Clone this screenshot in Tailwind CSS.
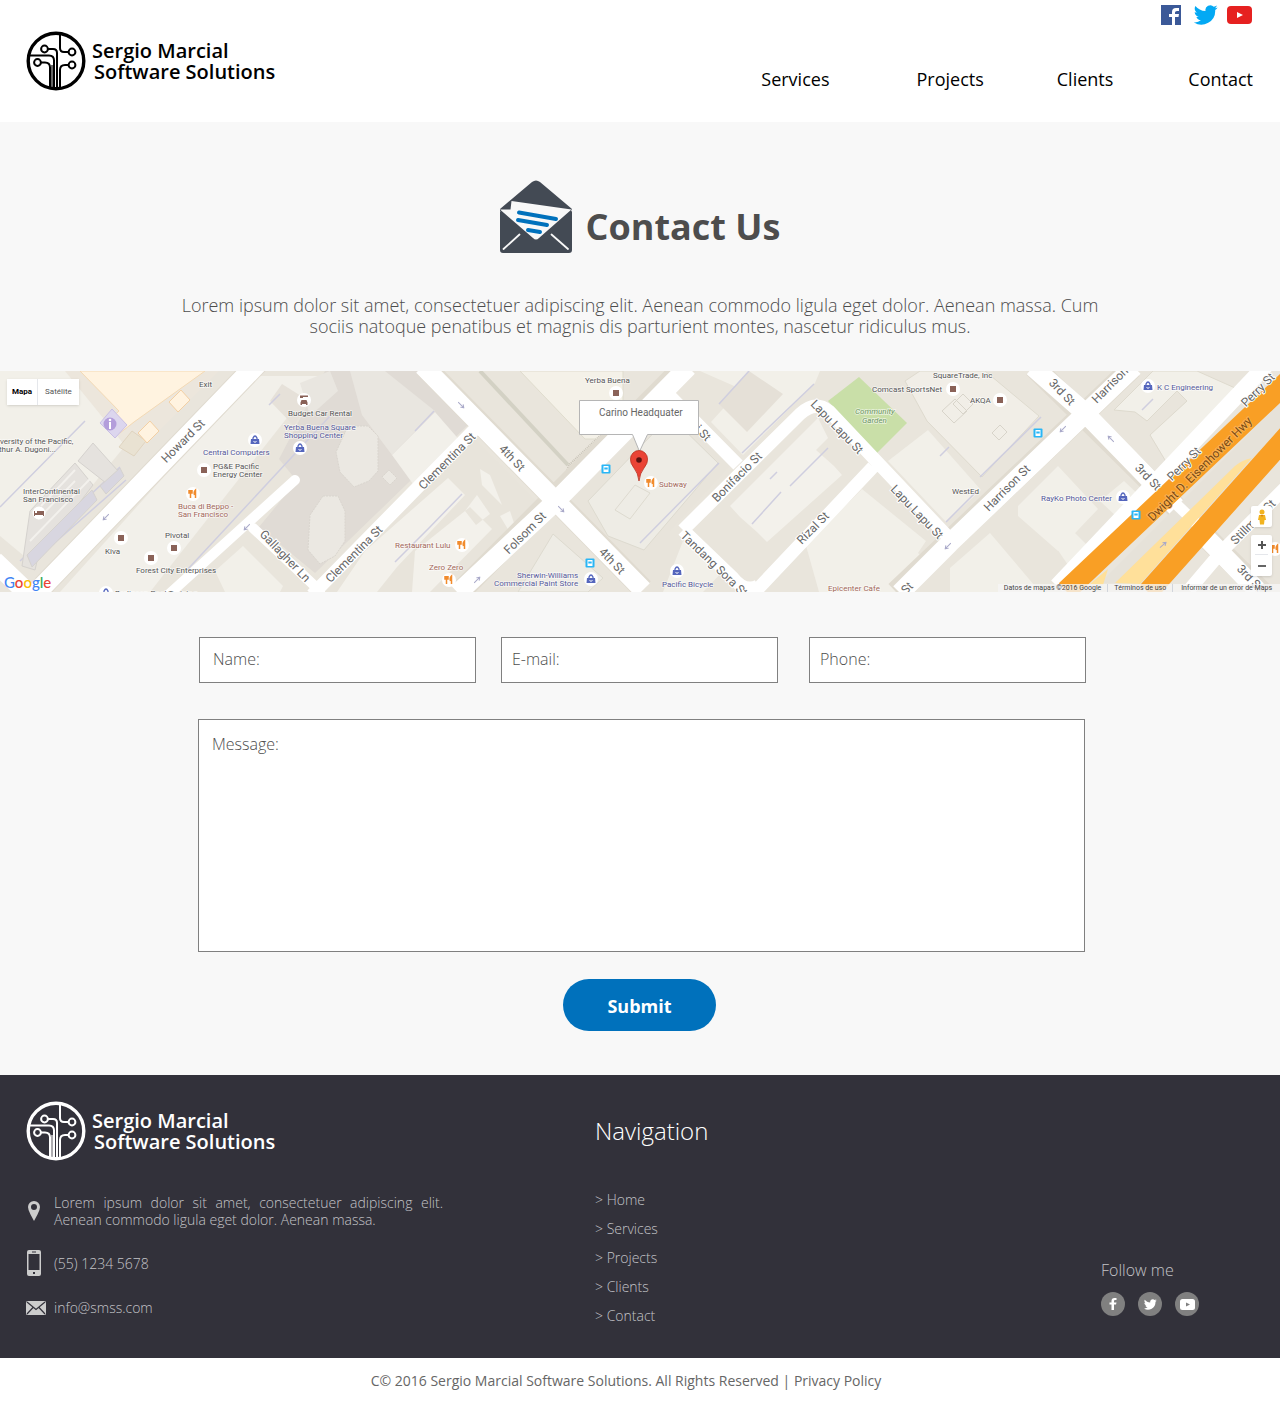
<!DOCTYPE html>
<html lang="en">
<head>
<meta charset="utf-8">
<meta name="viewport" content="width=device-width, initial-scale=1">
<title>Contact Us - Sergio Marcial Software Solutions</title>
<script src="https://cdn.jsdelivr.net/npm/@tailwindcss/browser@4"></script>
</head>
<body class="bg-white font-['Open_Sans',sans-serif] text-black">

<!-- Shared symbols -->
<svg class="hidden" aria-hidden="true">
  <symbol id="logo" viewBox="0 0 60 60">
    <g fill="none" stroke="currentColor">
      <circle cx="30" cy="30" r="27.8" stroke-width="3.4"/>
      <g stroke-width="2">
        <circle cx="18.5" cy="18" r="3.4"/><circle cx="46" cy="21" r="3.4"/>
        <circle cx="11.500" cy="31.500" r="3.400"/><circle cx="46" cy="34" r="3.400"/>
        <path d="M22 18h5q4 0 4 4v35M34 4v13q0 4 4 4h5M3 24.500h20q5 0 5 5V57M15 31.500h4q5 0 5 5V56M43 34h-4q-5 0-5 5v17"/>
      </g>
      <path stroke-width="1.200" d="M26 34v23"/>
    </g>
  </symbol>
  <symbol id="bird" viewBox="0 0 24 20">
    <path fill="currentColor" d="M23.600 2.400c-.9.400-1.800.7-2.800.8 1-.6 1.800-1.600 2.100-2.700-.9.600-2 1-3.100 1.200A4.900 4.900 0 0 0 11.500 6.100C7.400 5.900 3.800 4 1.400 1 .1 3.200.7 6 2.900 7.500c-.8 0-1.500-.2-2.200-.6 0 2.300 1.600 4.400 3.900 4.900-.7.200-1.500.2-2.200.1.600 1.900 2.400 3.300 4.500 3.400A9.800 9.800 0 0 1-.3 17.300 13.900 13.900 0 0 0 21.200 5c.9-.7 1.800-1.600 2.400-2.600z"/>
  </symbol>
  <symbol id="poi" viewBox="-8 -8 16 16"><circle r="7" fill="#fff"/><rect x="-3" y="-3" width="6" height="6" fill="#8a6258"/></symbol>
  <symbol id="food" viewBox="-8 -8 16 16"><circle r="7" fill="#fff"/><path fill="none" stroke="#f18b2c" stroke-width="1.500" d="M-2.500-4V4M-4-4v3h3v-3M2.500 4v-8q-2 2-1 5"/></symbol>
  <symbol id="shop" viewBox="-8 -8 16 16"><circle r="7" fill="#fff"/><path fill="#5566bd" d="M-4-1h8l.5 5h-9z"/><path fill="none" stroke="#5566bd" stroke-width="1.300" d="M-2-1v-1q2-4 4 0v1"/><path fill="none" stroke="#fff" d="M-1.500 1.500q1.500 1.500 3 0"/></symbol>
  <symbol id="bus" viewBox="-5 -5 10 10"><rect x="-4.500" y="-4.500" width="9" height="9" rx="1" fill="#29b6f6"/><path fill="#fff" d="M-2.500-3h5v6h-5z"/><path fill="#29b6f6" d="M-1.700-1.500h3.400v2h-3.400z"/></symbol>
  <symbol id="arrow" viewBox="-5 -5 10 10"><path fill="none" stroke="#a9a9c9" d="M-4 0h8M1-2l3 2-3 2"/></symbol>
</svg>

<header class="flex h-[122px] items-start justify-between bg-white pl-[26px] pr-[27px]">
  <a href="#" class="mt-[31px] flex gap-[6px]">
    <svg class="h-[60px] w-[60px]" aria-hidden="true"><use href="#logo"/></svg>
    <span class="mt-[9px] text-[20px] font-semibold leading-[21px]">Sergio Marcial<br><span class="pl-[2px]">Software Solutions</span></span>
  </a>
  <div class="flex flex-col items-end pt-[5px]">
    <div class="flex items-center gap-[9px] pr-px">
      <a href="#" aria-label="Facebook"><svg class="h-5 w-5" viewBox="0 0 20 20"><rect width="20" height="20" fill="#3b5998"/><path fill="#fff" d="M11 20v-8H8V9h3V7q0-4 4-4h3v3h-2q-2 0-2 1.500V9h4l-.5 3H14v8z"/></svg></a>
      <a href="#" aria-label="Twitter" class="ml-1 text-[#03a9f4]"><svg class="h-5 w-6"><use href="#bird"/></svg></a>
      <a href="#" aria-label="YouTube"><svg class="h-[18px] w-[25px]" viewBox="0 0 25 18"><rect width="25" height="18" rx="4" fill="#e62120"/><path fill="#fff" d="M10 6l6 3-6 3z"/></svg></a>
    </div>
    <nav class="mt-[42px] flex text-[18px] leading-6">
      <a href="#">Services</a>
      <a href="#" class="ml-[87px]">Projects</a>
      <a href="#" class="ml-[73px]">Clients</a>
      <a href="#" class="ml-[75px]">Contact</a>
    </nav>
  </div>
</header>

<main class="bg-[#f8f8f8] pb-11">
  <section class="flex flex-col items-center pt-[58px]">
    <h1 class="flex items-end gap-[13px] pr-px text-[36px] font-bold leading-[52px] text-[#4d4d4d]">
      <svg class="h-[73px] w-[74px]" viewBox="0 0 74 73" aria-hidden="true">
        <path fill="#434a54" d="M1 29 33 2q4-3 8 0l32 27-1 2H1zM2 31h70q1 0 1 1v38q0 3-3 3H4q-3 0-3-3V32q0-1 1-1z"/>
        <path fill="#f8f8f8" d="M1 29.500h10.500l1-8.500 60 8.500L40 58q-3 3-6 0z"/>
        <path stroke="#f8f8f8" stroke-width="1.800" stroke-linecap="round" d="M20.500 54.500 4.500 69M52.500 54.500 69 69"/>
        <path stroke="#0071bc" stroke-width="4" stroke-linecap="round" d="M20 32.500 57 39M19 40l29 5M29 50l12 2"/>
      </svg>
      <span>Contact Us</span>
    </h1>
    <p class="mt-[42px] max-w-[952px] px-3 text-center text-[18px] font-light leading-[21px] text-[#4d4d4d]">Lorem ipsum dolor sit amet, consectetuer adipiscing elit. Aenean commodo ligula eget dolor. Aenean massa. Cum sociis natoque penatibus et magnis dis parturient montes, nascetur ridiculus mus.</p>
  </section>

  <section class="relative mt-[34px] h-[221px] overflow-hidden bg-[#e9e5dc] font-['Roboto',sans-serif]" aria-label="Map">
    <svg class="h-full w-full" viewBox="0 0 1280 221" preserveAspectRatio="xMidYMid slice">
      <!-- Blocks and buildings -->
      <path fill="#f2f0e9" d="M0 0h70l55 75-95 115L0 165z"/>
      <path fill="#ece6dc" d="M65 0 134 85l85-85z"/>
      <path fill="#fff3e0" stroke="#f3d9b4" d="M80 0 119 40 108 50l12 12 14-11 71-51z"/>
      <path fill="#e9e2d2" stroke="#dfd4c0" d="m119 76 15 9 12-15-14-10z"/>
      <path fill="#fff3e0" stroke="#f3d0a4" d="m138 62 12-12 9 10-12 12zM169 31l12-12 9 10-12 12z"/>
      <path fill="#dcd6ee" stroke="#c9bfe4" d="m100 52 12-14 15 16-12 13z"/>
      <path fill="#f2f0ea" d="m160 110 100-105h60L150 221H60z"/>
      <path fill="#e0dbd5" d="M325 0h100l45 52-155 150-56-46 38-46-18-22z"/>
      <path fill="#e9e6e0" d="M350 0h35l50 40-43 44-30-40zM300 12l30-12 8 20-28 25z"/>
      <path fill="#f2f0ea" d="m392 84 43-43 27 31-42 40-7 1z"/>
      <path fill="#e6e1d9" d="m270 30 24 25 15-25-27-17z"/>
      <g fill="#ebe8e2" stroke="#d9d5ce" stroke-dasharray="2 1">
        <path d="M348 55h20l10 10v35l-9 10-15 6-14-15-4-20z"/><path d="M323 125h15l7 15v30l-10 15-15 8-12-14 2-35z"/><path d="m382 106 7-7 8 8-7 7z"/>
      </g>
      <path fill="#e8e4db" d="m325 221 150-153 69 70-85 83zM570 130l70-70 45-10 45 45-60 65v61h-30z"/>
      <path fill="#f3f1eb" d="m365 180 83-73 17 17-68 72-20 25h-40zM415 180l55-44 22 22-62 63h-18zM465 140l11 14 14-11-13-19zM480 98l10 6 12 30-20-20zM500 145l10-5 5 15-6 5z"/>
      <path fill="#f4f1e8" stroke="#dfdccd" d="m520 0 65 68h18l20-20V0z"/>
      <path fill="none" stroke="#d3d1c4" stroke-width="4" d="m480 0 88 94"/>
      <path fill="none" stroke="#c9c4b8" stroke-width="2" stroke-dasharray="1 1" d="m561 118 8-24 34-32"/>
      <path fill="#eeece5" stroke="#dddacf" d="m588 130 82-85 48 47-74 87-36-14zM615 139l20-25 15 8-20 26zM518 221l35-58 50 44-15 14z"/>
      <path fill="#f2f0e9" d="m700 0 120 0-5 12-72 72-32-33 30-33z"/>
      <path fill="#e5e0d7" d="m719 33 30-33 34 23-36 38z"/>
      <path fill="#f3f1eb" d="m730 135 88-88 10 20-12 12 18 16 8 9-75 67-10-10-17-15z"/>
      <path fill="#c9dfa8" d="m828 30 31-24 48 46-31 31z"/>
      <path fill="#f2f0e9" d="m888 90 40-31 53 60-35 32zM850 130l12-12 64 52-8 12 15 14-30 25h-84l-14-50z"/>
      <path fill="#f1eee7" stroke="#dedace" d="m905 10 15-10h65l54 45-57 61-55-56z"/>
      <path fill="none" stroke="#d8d4ca" d="m942 40 13-12 12 12-13 12zM953 33l10-10 10 10-10 10zM992 62l8-8 7 7-8 8z"/>
      <path fill="#f2f0e9" d="m950 197 40-35 50 59h-90zM1018 135l40-40 40 43-40 42-40-35zM1045 160l15-13 30 30-20 20zM1100 130l24-20 17 16-24 20z"/>
      <path fill="#f2f0e9" stroke="#dedace" d="m1114 39 39-39h44l47 21-76 73-18-30 37-34-10-10-30 30-12-9z"/>
      <path fill="#f2f0e9" d="m683 170 45 25-25 26h-40zM215 200l28-25 40 40-3 6h-55z"/>
      <path stroke="#cfcedf" stroke-width="1.500" fill="none" d="M0 136 85 50M20 190l100-94M34 190l92-81M188 198 330 45M269 34l11-11M415 60l19-20M462 123l-33 34-34 34M719 33l30-33M742 82l72-69M752 153l29-32M790 115l38-38M770 108l7-7M946 151l30-30M980 106l61-60M1142 39l11-11M1169 94l73-73M940 85l9-9M640 172l79-80"/>
      <!-- Hotel blocks -->
      <g fill="#e5e2de" stroke="#d5d2ce"><path d="m22 195 8-55 45-48 18 22-55 72-3 13zM78 90l15-18 25 28-12 12z"/><path fill="#d8d6e0" d="m27 184 65-65 5 10-65 67zM100 115l20-18 4 8-18 18z"/></g>
      <path fill="none" stroke="#f3f1ed" stroke-width="2" d="m30 170 60-62m-52 40 37-38m-34 25 34-36"/>
      <!-- Streets -->
      <g fill="none" stroke="#e0dbd0" stroke-width="22"><path d="m258-8-215 223"/><path d="m425-4 218 222M460 221 680 0M1034-4l232 229M896 221l236-224"/></g>
      <g fill="none" stroke="#fff" stroke-linejoin="round">
        <path stroke-width="20" d="M260-10 43 215l-13 13M-6 190l44 42"/>
        <path stroke-width="10" stroke-linecap="round" d="M295 109 167 225M253 157l67 63"/>
        <path stroke-width="13" d="M477 56 312 224M660 15l78 79M1285 117l-62 62-34 40"/>
        <path stroke-width="19" d="m423-5 220 224M458 222 555 131 688-4M1033-4l50 44 174 179M900 222 950 172 1134-4"/>
        <path stroke-width="13" d="m755 221 118-125M683 159 800 43q15-14 29-3l120 127M683 159l50 48q12 15 25 8"/>
        <path stroke-width="16" d="m1270-10-213 225"/>
      </g>
      <!-- Highway -->
      <path fill="#e6e2d9" d="m1280 32-180 180h50l130-135z"/>
      <path stroke="#fff" stroke-width="11" d="m1175 132 50 48"/>
      <path fill="#ffe09a" d="M1115 212 1235 95q7-6 17-8l-112 126zM1090 213l18-15-5 16z"/>
      <path stroke="#f99f25" stroke-width="21" d="m1290 8-224 212M1288 64l-140 157"/>
      <g>
        <use href="#arrow" x="-5" y="-5" width="10" height="10" transform="translate(106 146) rotate(135)"/><use href="#arrow" x="-5" y="-5" width="10" height="10" transform="translate(247 156) rotate(135)"/><use href="#arrow" x="-5" y="-5" width="10" height="10" transform="translate(461 34) rotate(45)"/><use href="#arrow" x="-5" y="-5" width="10" height="10" transform="translate(561 138) rotate(45)"/><use href="#arrow" x="-5" y="-5" width="10" height="10" transform="translate(477 209) rotate(-45)"/><use href="#arrow" x="-5" y="-5" width="10" height="10" transform="translate(1063 58) rotate(135)"/><use href="#arrow" x="-5" y="-5" width="10" height="10" transform="translate(1111 68) rotate(225)"/><use href="#arrow" x="-5" y="-5" width="10" height="10" transform="translate(1163 174) rotate(-40)"/><use href="#arrow" x="-5" y="-5" width="10" height="10" transform="translate(948 175) rotate(135)"/>
      </g>
      <!-- Street names -->
      <g font-size="12" fill="#666" stroke="#fff" stroke-width="2" paint-order="stroke" text-anchor="middle" dominant-baseline="central">
        <text transform="translate(183 70) rotate(-45)">Howard St</text>
        <text transform="translate(447 90) rotate(-45)">Clementina St</text>
        <text transform="translate(354 183) rotate(-45)">Clementina St</text>
        <text transform="translate(285 185) rotate(46)">Gallagher Ln</text>
        <text transform="translate(512 87) rotate(46)">4th St</text>
        <text transform="translate(612 190) rotate(46)">4th St</text>
        <text transform="translate(525 162) rotate(-45)">Folsom St</text>
        <text transform="translate(703 62) rotate(46)">i St</text>
        <text transform="translate(737 106) rotate(-45)">Bonifacio St</text>
        <text transform="translate(837 56) rotate(46)">Lapu Lapu St</text>
        <text transform="translate(917 141) rotate(46)">Lapu Lapu St</text>
        <text transform="translate(813 157) rotate(-45)">Rizal St</text>
        <text transform="translate(714 193) rotate(44)">Tandang Sora St</text>
        <text transform="translate(907 217) rotate(-45)">St</text>
        <text transform="translate(1062 21) rotate(46)">3rd St</text>
        <text transform="translate(1148 106) rotate(46)">3rd St</text>
        <text transform="translate(1250 207) rotate(46)">3rd St</text>
        <text transform="translate(1110 14) rotate(-45)">Harrison</text>
        <text transform="translate(1007 117) rotate(-45)">Harrison St</text>
        <text transform="translate(1258 19) rotate(-45)">Perry St</text>
        <text transform="translate(1184 93) rotate(-45)">Perry St</text>
        <text transform="translate(1253 151) rotate(-45)">Stillman St</text>
        <text transform="translate(1200 98) rotate(-45)" fill="#7a4a12" stroke="#fbb252">Dwight D. Eisenhower Hwy</text>
      </g>
      <!-- Places -->
      <g>
        <circle cx="110" cy="53" r="6.500" fill="#b39ddb"/><path stroke="#fff" stroke-width="2" d="M110 51v7"/><circle cx="110" cy="49" r="1.300" fill="#fff"/>
        <circle cx="39" cy="142" r="6.500" fill="#fff"/><path fill="#8a6258" d="M34 140h1v2h2v-2h7v5h-1v-1h-8v1h-1z"/>
        <circle cx="304" cy="29" r="7" fill="#fff"/><path fill="#8a6258" d="M300 24.500h8v1.500h-5v1h-3zM301.500 29h5l1 2.500v2.500h-1.500v-1h-4v1h-1.500v-2.500z"/>
        <use href="#shop" x="247" y="61" width="16" height="16"/><use href="#shop" x="292" y="69" width="16" height="16"/>
        <use href="#poi" x="196" y="91" width="16" height="16"/><use href="#food" x="185" y="115" width="16" height="16"/>
        <use href="#poi" x="113" y="159" width="16" height="16"/><use href="#poi" x="166" y="169" width="16" height="16"/><use href="#poi" x="143" y="179" width="16" height="16"/>
        <use href="#shop" x="98" y="214" width="16" height="16"/>
        <use href="#food" x="454" y="166" width="16" height="16"/><use href="#food" x="441" y="201" width="16" height="16"/>
        <use href="#poi" x="608" y="14" width="16" height="16"/><use href="#shop" x="583" y="200" width="16" height="16"/>
        <use href="#food" x="643" y="104" width="16" height="16"/><use href="#shop" x="669" y="192" width="16" height="16"/>
        <use href="#poi" x="945" y="10" width="16" height="16"/><use href="#poi" x="992" y="21" width="16" height="16"/>
        <use href="#shop" x="1140" y="7" width="16" height="16"/><use href="#shop" x="1115" y="118" width="16" height="16"/>
        <use href="#food" x="1267" y="170" width="16" height="16"/>
        <use href="#bus" x="601" y="93" width="10" height="10"/><use href="#bus" x="585" y="187" width="10" height="10"/><use href="#bus" x="1033" y="57" width="10" height="10"/><use href="#bus" x="1131" y="139" width="10" height="10"/>
      </g>
      <g font-size="8" fill="#555" stroke="#fff" stroke-opacity=".6" stroke-width="1.500" paint-order="stroke">
        <text x="199" y="16">Exit</text>
        <text x="-2" y="73">iversity of the Pacific,</text><text x="-1" y="81">thur A. Dugoni...</text>
        <text x="23" y="123">InterContinental</text><text x="23" y="131">San Francisco</text>
        <text x="288" y="45">Budget Car Rental</text>
        <text x="213" y="98">PG&amp;E Pacific</text><text x="213" y="106">Energy Center</text>
        <text x="105" y="183">Kiva</text><text x="165" y="167">Pivotal</text><text x="136" y="202">Forest City Enterprises</text>
        <text x="115" y="225">Barlinson Post Training</text>
        <text x="585" y="12">Yerba Buena</text>
        <text x="872" y="21">Comcast SportsNet</text><text x="933" y="7">SquareTrade, Inc</text><text x="970" y="32">AKQA</text><text x="952" y="123">WestEd</text>
        <g fill="#55599a"><text x="284" y="59">Yerba Buena Square</text><text x="284" y="67">Shopping Center</text><text x="203" y="84">Central Computers</text><text x="517" y="207">Sherwin-Williams</text><text x="494" y="215">Commercial Paint Store</text><text x="662" y="216">Pacific Bicycle</text><text x="1157" y="19">K C Engineering</text><text x="1041" y="130">RayKo Photo Center</text></g>
        <g fill="#a3685a"><text x="178" y="138">Buca di Beppo -</text><text x="178" y="146">San Francisco</text><text x="395" y="177">Restaurant Lulu</text><text x="429" y="199">Zero Zero</text><text x="659" y="116">Subway</text><text x="828" y="220">Epicenter Cafe</text></g>
        <g fill="#6b9460" font-style="italic"><text x="855" y="43">Community</text><text x="862" y="52">Garden</text></g>
      </g>
      <!-- Callout and pin -->
      <path fill="#fff" stroke="#b5b5b5" d="M579.500 29.500h119v34h-51l-8 17-7-17h-53z"/>
      <text x="599" y="45" font-size="10" fill="#666">Carino Headquater</text>
      <path fill="#ea4335" stroke="#b93221" stroke-width=".8" d="M639 110q-1-8-5-13-4-5-3.500-9a8.500 8.500 0 0 1 17 0q.5 4-3.500 9-4 5-5 13z"/><circle cx="639" cy="89" r="2.800" fill="#5c1210"/>
    </svg>
    <div class="absolute left-[7px] top-2 flex h-[26px] items-center bg-white text-[8px] shadow-sm">
      <button type="button" class="h-full border-r border-gray-200 px-[5px] font-bold">Mapa</button>
      <button type="button" class="h-full px-[7px] text-[#555]">Satélite</button>
    </div>
    <div class="absolute bottom-0 left-1 font-['Lato',sans-serif] text-[15px] font-medium leading-[19px]" aria-label="Google"><span class="text-[#4285f4]">G</span><span class="text-[#ea4335]">o</span><span class="text-[#fbbc05]">o</span><span class="text-[#4285f4]">g</span><span class="text-[#34a853]">l</span><span class="text-[#ea4335]">e</span></div>
    <div class="absolute right-2 top-[135px] flex w-[21px] flex-col gap-2">
      <button type="button" aria-label="Street View" class="flex h-[21px] items-center justify-center rounded-xs bg-white shadow-sm"><svg class="h-4 w-3" viewBox="0 0 12 16"><circle cx="6" cy="3" r="2.500" fill="#f2b31f"/><path fill="#f2b31f" d="M3 6h6l1 5H8.500L8 15.500H4L3.500 11H2z"/><path fill="#d98211" d="M4.500 6h3L6 8z"/></svg></button>
      <div class="flex flex-col rounded-xs bg-white px-1 shadow-sm">
        <button type="button" aria-label="Zoom in" class="flex h-5 items-center justify-center border-b border-gray-200"><svg class="h-2 w-2" viewBox="0 0 8 8"><path stroke="#555" stroke-width="2" d="M0 4h8M4 0v8"/></svg></button>
        <button type="button" aria-label="Zoom out" class="flex h-[21px] items-center justify-center"><svg class="h-2 w-2" viewBox="0 0 8 8"><path stroke="#666" stroke-width="2" d="M0 4h8"/></svg></button>
      </div>
    </div>
    <div class="absolute bottom-0 right-0 flex bg-[#f5f5f5]/80 text-[7px] leading-[8px] text-[#444]">
      <span class="px-[6px]">Datos de mapas ©2016 Google</span><a href="#" class="border-l border-gray-300 px-[6px]">Términos de uso</a><a href="#" class="border-l border-gray-300 px-2">Informar de un error de Maps</a>
    </div>
  </section>

  <form class="mt-[45px] flex flex-col items-center pl-1 text-[16px] font-light text-[#4d4d4d]">
    <div class="flex w-full max-w-[888px] flex-col">
      <div class="flex pl-px">
        <div class="flex h-[46px] min-w-0 flex-1 items-center border border-[#808080] bg-white pb-[2px] pl-[10px]"><label for="name" class="pl-[3px]">Name:</label><input id="name" type="text" class="ml-2 min-w-0 flex-1 outline-none"></div>
        <div class="ml-[25px] flex h-[46px] min-w-0 flex-1 items-center border border-[#808080] bg-white pb-[2px] pl-[10px]"><label for="email">E-mail:</label><input id="email" type="email" class="ml-2 min-w-0 flex-1 outline-none"></div>
        <div class="ml-[31px] flex h-[46px] min-w-0 flex-1 items-center border border-[#808080] bg-white pb-[2px] pl-[10px]"><label for="phone">Phone:</label><input id="phone" type="tel" class="ml-2 min-w-0 flex-1 outline-none"></div>
      </div>
      <div class="mr-px mt-9 flex h-[233px] flex-col border border-[#808080] bg-white px-[13px] pt-3"><label for="message">Message:</label><textarea id="message" class="flex-1 resize-none outline-none"></textarea></div>
    </div>
    <button type="submit" class="mr-[5px] mt-[27px] h-[52px] w-[153px] rounded-full bg-[#0071bc] pt-[3px] text-[18px] font-bold text-white">Submit</button>
  </form>
</main>

<footer>
  <div class="flex min-h-[283px] bg-[#32313a] font-light text-[#c4c4c8]">
    <div class="w-[595px] pl-[26px] pt-[26px]">
      <a href="#" class="flex gap-[6px] text-white">
        <svg class="h-[60px] w-[60px]" aria-hidden="true"><use href="#logo"/></svg>
        <span class="mt-[9px] text-[20px] font-semibold leading-[21px]">Sergio Marcial<br><span class="pl-[2px]">Software Solutions</span></span>
      </a>
      <ul class="mt-[33px] w-[417px] text-[14px] leading-[17px]">
        <li class="flex items-center gap-5">
          <svg class="ml-[2px] h-5 w-3 shrink-0" viewBox="0 0 12 20" aria-hidden="true"><path fill="#ccc" fill-rule="evenodd" d="M6 0a6 6 0 0 1 6 6q0 3-2.500 7.500L6 20l-3.500-6.500Q0 9 0 6a6 6 0 0 1 6-6zm0 3a3 3 0 1 0 0 6 3 3 0 0 0 0-6z"/></svg>
          <p class="-ml-[6px] text-justify">Lorem ipsum dolor sit amet, consectetuer adipiscing elit. Aenean commodo ligula eget dolor. Aenean massa.</p>
        </li>
        <li class="mt-[22px] flex items-center gap-[13px]">
          <svg class="ml-px h-[26px] w-[14px]" viewBox="0 0 14 26" aria-hidden="true"><path fill="#ccc" fill-rule="evenodd" d="M2 0h10q2 0 2 2v22q0 2-2 2H2q-2 0-2-2V2q0-2 2-2zM1.500 4v16h11V4zM6 22v2h2v-2zM5 1.500v1h4v-1z"/></svg>
          <span>(55) 1234 5678</span>
        </li>
        <li class="mt-[23px] flex items-center gap-2">
          <svg class="h-[14px] w-5" viewBox="0 0 20 14" aria-hidden="true"><rect width="20" height="14" rx="1.500" fill="#ccc"/><path fill="none" stroke="#32313a" stroke-width="1.200" d="m1 1 9 7.500L19 1M1 13l6-6.500M19 13l-6-6.500"/></svg>
          <a href="#">info@smss.com</a>
        </li>
      </ul>
    </div>
    <nav class="flex-1 pt-[38px]">
      <h2 class="text-[24px] leading-9 text-white">Navigation</h2>
      <ul class="mt-9 text-[14px] leading-[29px]">
        <li><a href="#">&gt; Home</a></li>
        <li><a href="#">&gt; Services</a></li>
        <li><a href="#">&gt; Projects</a></li>
        <li><a href="#">&gt; Clients</a></li>
        <li><a href="#">&gt; Contact</a></li>
      </ul>
    </nav>
    <div class="mr-[81px] self-end pb-[42px]">
      <p class="text-[16px] leading-6">Follow me</p>
      <div class="mt-[10px] flex gap-[13px] text-white">
        <a href="#" aria-label="Facebook" class="flex size-6 items-center justify-center rounded-full bg-[#808080]"><svg class="h-3 w-2" viewBox="0 0 8 12"><path fill="currentColor" d="M2.500 12V6.500H.5v-2h2V3q0-3 3-3h2v2H6q-1 0-1 1v1.500h2.500l-.5 2H5V12z"/></svg></a>
        <a href="#" aria-label="Twitter" class="flex size-6 items-center justify-center rounded-full bg-[#808080]"><svg class="h-[11px] w-[13px]"><use href="#bird"/></svg></a>
        <a href="#" aria-label="YouTube" class="flex size-6 items-center justify-center rounded-full bg-[#808080]"><svg class="h-[11px] w-[15px]" viewBox="0 0 15 11"><rect width="15" height="11" rx="2.500" fill="currentColor"/><path fill="#808080" d="m6 3.500 4 2-4 2z"/></svg></a>
      </div>
    </div>
  </div>
  <p class="h-[45px] bg-white pr-7 text-center text-[14px] leading-[45px] text-[#666]">C© 2016 Sergio Marcial Software Solutions. All Rights Reserved | <a href="#">Privacy Policy</a></p>
</footer>
</body>
</html>
